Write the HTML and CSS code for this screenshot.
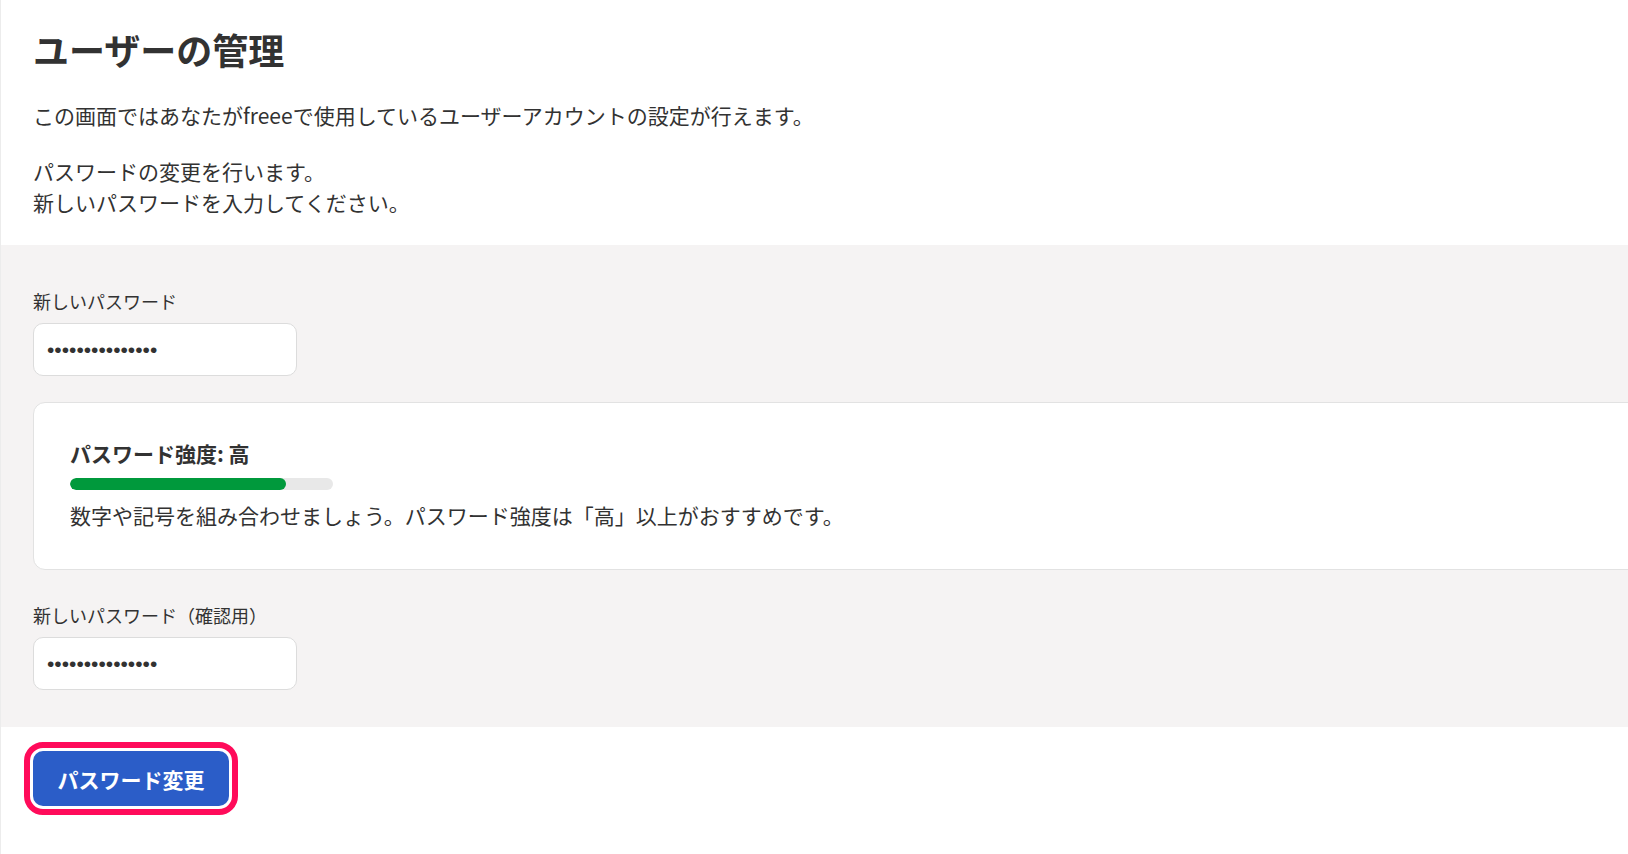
FILE: index.html
```html
<!DOCTYPE html>
<html lang="ja">
<head>
<meta charset="utf-8">
<title>ユーザーの管理</title>
<link rel="stylesheet" href="styles.css">
</head>
<body>
<div class="page">
  <header class="intro">
    <h1 class="title">ユーザーの管理</h1>
    <p class="lead">この画面ではあなたがfreeeで使用しているユーザーアカウントの設定が行えます。</p>
    <p class="lead">パスワードの変更を行います。<br>新しいパスワードを入力してください。</p>
  </header>
  <section class="form-area">
    <label class="field-label" for="pw1">新しいパスワード</label>
    <input class="pw-input" id="pw1" type="password" value="xxxxxxxxxxxxxxx">
    <div class="strength-card">
      <div class="strength-title">パスワード強度: 高</div>
      <div class="strength-track"><div class="strength-fill" style="width: 82%"></div></div>
      <p class="strength-note">数字や記号を組み合わせましょう。パスワード強度は「高」以上がおすすめです。</p>
    </div>
    <label class="field-label" for="pw2">新しいパスワード（確認用）</label>
    <input class="pw-input" id="pw2" type="password" value="xxxxxxxxxxxxxxx">
  </section>
  <div class="actions">
    <button class="primary-btn" type="button">パスワード変更</button>
  </div>
</div>
</body>
</html>
```
FILE: styles.css
```css
html, body {
  margin: 0;
  padding: 0;
  background: #ffffff;
}
body {
  font-family: "Noto Sans CJK JP", "Noto Sans", sans-serif;
  color: #323232;
  overflow: hidden;
}
.page {
  min-height: 854px;
  border-left: 1px solid #ececec;
}
.intro {
  padding: 24px 32px 27px;
}
.title {
  margin: 0;
  font-size: 36px;
  line-height: 50px;
  font-weight: 700;
  color: #323232;
}
.lead {
  margin: 26px 0 0;
  font-size: 21px;
  line-height: 31px;
}
.lead + .lead {
  margin-top: 25px;
}
.form-area {
  background: #f5f3f3;
  padding: 43px 0 37px 32px;
  display: flex;
  flex-direction: column;
  align-items: flex-start;
}
.field-label {
  font-size: 18px;
  line-height: 27px;
  color: #323232;
}
.pw-input {
  margin-top: 8px;
  box-sizing: border-box;
  width: 264px;
  height: 53px;
  border: 1px solid #dcdcdc;
  border-radius: 10px;
  background: #fff;
  padding: 0 13px;
  font-family: "Liberation Sans", sans-serif;
  font-size: 21px;
  color: #323232;
  outline: none;
}
.strength-card {
  box-sizing: border-box;
  margin: 26px 0 32px;
  align-self: stretch;
  margin-right: -20px;
  background: #fff;
  border: 1px solid #e2e2e2;
  border-radius: 12px;
  padding: 36px 36px 38px;
}
.strength-title {
  font-size: 21px;
  line-height: 28px;
  font-weight: 700;
}
.strength-track {
  margin-top: 11px;
  width: 263px;
  height: 12px;
  border-radius: 6px;
  background: #e8e8e8;
  overflow: hidden;
}
.strength-fill {
  height: 100%;
  border-radius: 6px;
  background: #00993c;
}
.strength-note {
  margin: 10px 0 0;
  font-size: 21px;
  line-height: 31px;
}
.actions {
  padding: 24px 32px;
}
.primary-btn {
  box-sizing: border-box;
  width: 196px;
  height: 55px;
  border: none;
  border-radius: 10px;
  background: #2b5dc8;
  color: #fff;
  font-family: "Noto Sans CJK JP", sans-serif;
  font-size: 21px;
  font-weight: 700;
  outline: 6px solid #ff0b5a;
  outline-offset: 3px;
  cursor: pointer;
}
```
